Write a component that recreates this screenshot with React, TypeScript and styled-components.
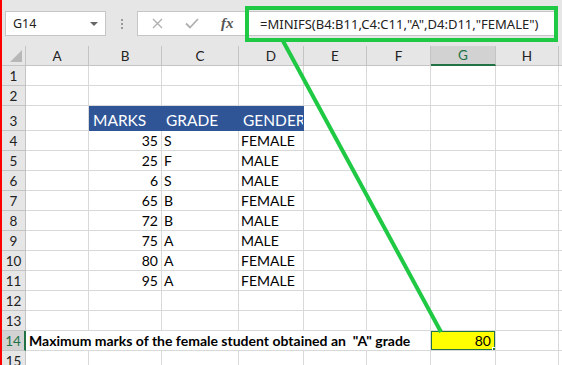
import React from "react";
import styled, { createGlobalStyle } from "styled-components";

const GlobalStyle = createGlobalStyle`
  html, body {
    margin: 0;
    padding: 0;
    background: #ffffff;
  }
  body {
    font-family: Lato, "Liberation Sans", sans-serif;
  }
`;

interface iRow {
  marks: number;
  grade: string;
  gender: string;
}

const rows: iRow[] = [
  { marks: 35, grade: "S", gender: "FEMALE" },
  { marks: 25, grade: "F", gender: "MALE" },
  { marks: 6, grade: "S", gender: "MALE" },
  { marks: 65, grade: "B", gender: "FEMALE" },
  { marks: 72, grade: "B", gender: "MALE" },
  { marks: 75, grade: "A", gender: "MALE" },
  { marks: 80, grade: "A", gender: "FEMALE" },
  { marks: 95, grade: "A", gender: "FEMALE" },
];

const columns = ["A", "B", "C", "D", "E", "F", "G", "H", ""];

const App: React.FC = () => {
  return (
    <Page>
      <GlobalStyle />
      <Frame>
        <Toolbar>
          <NameBox>
            <span>G14</span>
            <Caret />
          </NameBox>
          <Grip>
            <Dot />
            <Dot />
            <Dot />
          </Grip>
          <FormulaBox>
            <IconBtn>
              <svg width="11" height="11" viewBox="0 0 11 11">
                <path d="M1 1L10 10M10 1L1 10" stroke="#b0b0b0" strokeWidth="1.4" fill="none" />
              </svg>
            </IconBtn>
            <IconBtn>
              <svg width="14" height="11" viewBox="0 0 14 11">
                <path d="M1 5.5L5 9.5L13 1" stroke="#b0b0b0" strokeWidth="1.8" fill="none" />
              </svg>
            </IconBtn>
            <Fx>fx</Fx>
            <FormulaText>=MINIFS(B4:B11,C4:C11,"A",D4:D11,"FEMALE")</FormulaText>
          </FormulaBox>
        </Toolbar>

        <Sheet>
          <Corner>
            <Triangle />
          </Corner>
          {columns.map((c, i) => (
            <ColHead key={i} active={c === "G"}>
              {c}
            </ColHead>
          ))}

          {/* rows 1-2 */}
          {[1, 2].map((r) => (
            <React.Fragment key={r}>
              <RowHead>{r}</RowHead>
              {columns.map((_, i) => (
                <Cell key={i} />
              ))}
            </React.Fragment>
          ))}

          {/* row 3 headings */}
          <RowHead>3</RowHead>
          <Cell />
          <Heading>MARKS</Heading>
          <Heading>GRADE</Heading>
          <Heading>GENDER</Heading>
          {columns.slice(4).map((_, i) => (
            <Cell key={i} />
          ))}

          {rows.map((row, idx) => (
            <React.Fragment key={idx}>
              <RowHead>{idx + 4}</RowHead>
              <Cell />
              <Cell align="right">{row.marks}</Cell>
              <Cell>{row.grade}</Cell>
              <Cell>{row.gender}</Cell>
              {columns.slice(4).map((_, i) => (
                <Cell key={i} />
              ))}
            </React.Fragment>
          ))}

          {[12, 13].map((r) => (
            <React.Fragment key={r}>
              <RowHead>{r}</RowHead>
              {columns.map((_, i) => (
                <Cell key={i} />
              ))}
            </React.Fragment>
          ))}

          <RowHead active>14</RowHead>
          <Label>Maximum marks of the female student obtained an &nbsp;"A" grade</Label>
          <Selected>
            80
            <Handle />
          </Selected>
          <Cell />
          <Cell />

          <RowHead>15</RowHead>
          {columns.map((_, i) => (
            <Cell key={i} />
          ))}
        </Sheet>
      </Frame>

      <Callout width="562" height="365" viewBox="0 0 562 365">
        <rect x="247" y="8" width="309" height="32" fill="none" stroke="#1fc944" strokeWidth="4" />
        <line x1="283" y1="41" x2="441" y2="332" stroke="#1fc944" strokeWidth="4" />
      </Callout>
    </Page>
  );
};

export default App;

const Page = styled.div`
  position: relative;
  width: 562px;
  height: 365px;
  overflow: hidden;
`;

const Frame = styled.div`
  height: 100%;
  border-left: 2px solid #ff0000;
  box-sizing: border-box;
  background: #ffffff;
`;

const Toolbar = styled.div`
  height: 46px;
  background: #e6e6e6;
  display: flex;
  align-items: flex-start;
  padding: 11px 0 0 3px;
  box-sizing: border-box;
`;

const NameBox = styled.div`
  width: 101px;
  height: 25px;
  box-sizing: border-box;
  background: #ffffff;
  border: 1px solid #c6c6c6;
  display: flex;
  align-items: center;
  justify-content: space-between;
  padding: 0 7px 0 7px;
  font-family: "Noto Sans", sans-serif;
  font-size: 12.5px;
  color: #222;
`;

const Caret = styled.div`
  width: 0;
  height: 0;
  border-left: 4px solid transparent;
  border-right: 4px solid transparent;
  border-top: 4px solid #666;
`;

const Grip = styled.div`
  width: 31px;
  height: 25px;
  display: flex;
  flex-direction: column;
  align-items: center;
  justify-content: center;
  gap: 2px;
`;

const Dot = styled.div`
  width: 2px;
  height: 2px;
  background: #9a9a9a;
`;

const FormulaBox = styled.div`
  width: 420px;
  height: 25px;
  box-sizing: border-box;
  background: #ffffff;
  border: 1px solid #c6c6c6;
  display: flex;
  align-items: center;
  padding-left: 14px;
`;

const IconBtn = styled.div`
  width: 33px;
  display: flex;
  align-items: center;
`;

const Fx = styled.div`
  width: 39px;
  font-family: "Liberation Serif", serif;
  font-style: italic;
  font-weight: bold;
  font-size: 15px;
  color: #555;
  padding-left: 3px;
`;

const FormulaText = styled.div`
  font-family: "Noto Sans", sans-serif;
  font-size: 13px;
  color: #222;
  white-space: nowrap;
`;

const Sheet = styled.div`
  display: grid;
  grid-template-columns: 24px 63px 73px 77px 65px 63px 64px 65px 63px 1fr;
  grid-template-rows: 20px 20px 20px 25px repeat(12, 20px);
`;

const Corner = styled.div`
  position: relative;
  background: #e6e6e6;
  border-right: 1px solid #c4c4c4;
  border-bottom: 1px solid #c4c4c4;
  box-sizing: border-box;
`;

const Triangle = styled.div`
  position: absolute;
  right: 3px;
  bottom: 3px;
  width: 0;
  height: 0;
  border-left: 12px solid transparent;
  border-bottom: 12px solid #b7b7b7;
`;

const ColHead = styled.div<{ active?: boolean }>`
  background: ${({ active }) => (active ? "#d2d2d2" : "#e6e6e6")};
  color: ${({ active }) => (active ? "#217346" : "#222")};
  border-right: 1px solid #c4c4c4;
  border-bottom: ${({ active }) => (active ? "2px solid #217346" : "1px solid #c4c4c4")};
  box-sizing: border-box;
  display: flex;
  align-items: center;
  justify-content: center;
  font-size: 13.5px;
`;

const RowHead = styled.div<{ active?: boolean }>`
  background: ${({ active }) => (active ? "#d2d2d2" : "#e6e6e6")};
  color: ${({ active }) => (active ? "#217346" : "#222")};
  border-right: ${({ active }) => (active ? "2px solid #217346" : "1px solid #c4c4c4")};
  border-bottom: 1px solid #c4c4c4;
  box-sizing: border-box;
  display: flex;
  align-items: flex-end;
  justify-content: center;
  padding-bottom: 1px;
  font-size: 13.5px;
`;

const Cell = styled.div<{ align?: "left" | "right" }>`
  border-right: 1px solid #d9d9d9;
  border-bottom: 1px solid #d9d9d9;
  box-sizing: border-box;
  display: flex;
  align-items: flex-end;
  justify-content: ${({ align }) => (align === "right" ? "flex-end" : "flex-start")};
  padding: 0 3px 1px 2px;
  font-size: 14px;
  color: #000;
  white-space: nowrap;
  overflow: hidden;
`;

const Heading = styled(Cell)`
  background: #2f5597;
  border-right-color: #2f5597;
  border-bottom-color: #2f5597;
  color: #ffffff;
  font-size: 15.5px;
  padding-left: 4px;
  padding-bottom: 1px;
`;

const Label = styled(Cell)`
  grid-column: span 6;
  font-weight: bold;
  padding-left: 3px;
`;

const Selected = styled(Cell)`
  position: relative;
  justify-content: flex-end;
  background: #ffff00;
  padding-right: 4px;

  &::after {
    content: "";
    position: absolute;
    top: -1px;
    left: -1px;
    right: -1px;
    bottom: -1px;
    border: 2px solid #217346;
  }
`;

const Handle = styled.div`
  position: absolute;
  right: -4px;
  bottom: -4px;
  width: 5px;
  height: 5px;
  background: #217346;
  border: 1px solid #ffffff;
  z-index: 1;
`;

const Callout = styled.svg`
  position: absolute;
  left: 0;
  top: 0;
  pointer-events: none;
`;
